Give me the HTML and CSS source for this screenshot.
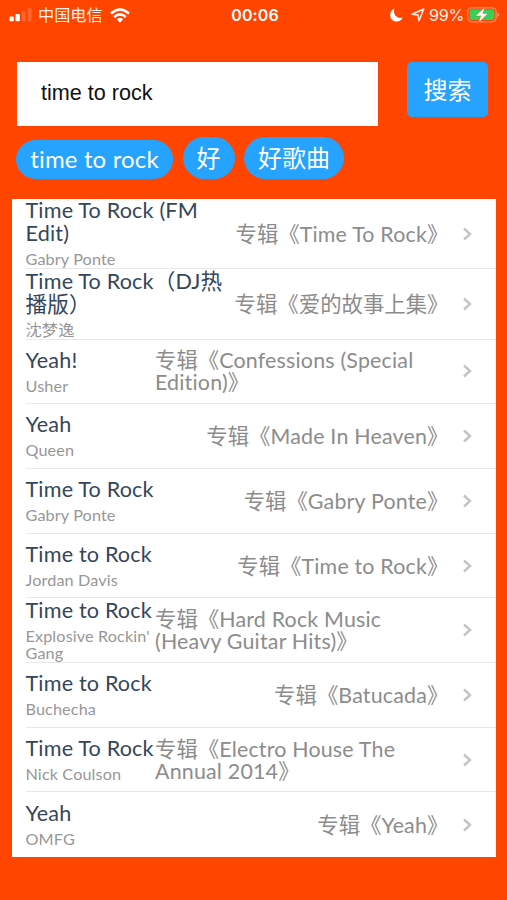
FILE: index.html
```
<!DOCTYPE html>
<html lang="zh-CN">
<head>
<meta charset="utf-8">
<title>搜索</title>
<link rel="stylesheet" href="styles.css">
</head>
<body>
<header class="status">
  <div class="status-left">
    <svg class="signal" width="24" height="14" viewBox="0 0 24 14" fill="#fff"><rect x=".5" y="8.5" width="4.3" height="4.8" rx="1"/><rect x="6.500" y="6" width="4.300" height="7.3" rx="1"/><rect x="12.8" y="3" width="3.800" height="10.3" rx="1" opacity=".18"/><rect x="18.8" y="0" width="3.800" height="13.3" rx="1" opacity=".18"/></svg>
    <span class="carrier">中国电信</span>
    <svg class="wifi" width="20" height="15" viewBox="0 0 20 15" fill="none" stroke="#fff" stroke-width="2.6"><path d="M1 5.4Q10-2.4 19 5.4"/><path d="M4.2 8.9Q10 3.9 15.800 8.900"/><path d="M6.700 11.200Q10 8.200 13.300 11.200L10 14.700Z" fill="#fff" stroke="none"/></svg>
  </div>
  <time class="clock">00:06</time>
  <div class="status-right">
    <svg class="moon" width="13" height="14" viewBox="0 0 13 14"><path fill="#fff" d="M4.400.6C1.500 2 0 4.500.2 7.400.4 11 3.200 13.500 6.700 13.500c2.800 0 5-1.500 6-4C7.500 11.300 2.500 7 4.400.6Z"/></svg>
    <svg class="arrow" width="14" height="14" viewBox="0 0 14 14"><path fill="none" stroke="#fff" stroke-opacity=".9" stroke-width="1.5" stroke-linejoin="round" d="M1 6.200 12.800 1 8 12.800 7 7Z"/></svg>
    <span class="percent">99%</span>
    <svg class="battery" width="34" height="16" viewBox="0 0 34 16"><rect x=".6" y=".8" width="28.500" height="14" rx="4" fill="none" stroke="#fff" stroke-opacity=".4" stroke-width="1.200"/><rect x="2.500" y="2.600" width="24.800" height="10.400" rx="2.300" fill="#34d058"/><path d="M30.500 5.500v4.500q1.800-.6 1.800-2.250t-1.800-2.250Z" fill="#fff" opacity=".4"/><path d="M17.800.2 8.500 8.900h5.300L11.500 15.700 21 6.600h-5.200Z" fill="#fff" stroke="#ff4500" stroke-width=".4"/></svg>
  </div>
</header>
<main>
  <section class="search">
    <div class="field">time to rock</div>
    <button class="go">搜索</button>
  </section>
  <nav class="tags">
    <span class="tag tag-latin">time to rock</span><span class="tag">好</span><span class="tag">好歌曲</span>
  </nav>
  <section class="list">
    <article class="row tall"><div class="song"><h2>Time To Rock (FM<br>Edit)</h2><p>Gabry Ponte</p></div><div class="album">专辑《<span>Time To Rock</span>》</div><svg class="chev" viewBox="0 0 9 14"><path d="M1 1.500 7 7 1 12.500"/></svg></article>
    <article class="row tall"><div class="song"><h2>Time To Rock（DJ热<br>播版）</h2><p>沈梦逸</p></div><div class="album">专辑《爱的故事上集》</div><svg class="chev" viewBox="0 0 9 14"><path d="M1 1.500 7 7 1 12.500"/></svg></article>
    <article class="row"><div class="song narrow"><h2>Yeah!</h2><p>Usher</p></div><div class="album wide">专辑《<span>Confessions (Special</span><br><span>Edition)</span>》</div><svg class="chev" viewBox="0 0 9 14"><path d="M1 1.500 7 7 1 12.500"/></svg></article>
    <article class="row"><div class="song"><h2>Yeah</h2><p>Queen</p></div><div class="album">专辑《<span>Made In Heaven</span>》</div><svg class="chev" viewBox="0 0 9 14"><path d="M1 1.500 7 7 1 12.500"/></svg></article>
    <article class="row"><div class="song"><h2>Time To Rock</h2><p>Gabry Ponte</p></div><div class="album">专辑《<span>Gabry Ponte</span>》</div><svg class="chev" viewBox="0 0 9 14"><path d="M1 1.500 7 7 1 12.500"/></svg></article>
    <article class="row"><div class="song"><h2>Time to Rock</h2><p>Jordan Davis</p></div><div class="album">专辑《<span>Time to Rock</span>》</div><svg class="chev" viewBox="0 0 9 14"><path d="M1 1.500 7 7 1 12.500"/></svg></article>
    <article class="row"><div class="song narrow"><h2>Time to Rock</h2><p>Explosive Rockin'<br>Gang</p></div><div class="album wide">专辑《<span>Hard Rock Music</span><br><span>(Heavy Guitar Hits)</span>》</div><svg class="chev" viewBox="0 0 9 14"><path d="M1 1.500 7 7 1 12.500"/></svg></article>
    <article class="row"><div class="song"><h2>Time to Rock</h2><p>Buchecha</p></div><div class="album">专辑《<span>Batucada</span>》</div><svg class="chev" viewBox="0 0 9 14"><path d="M1 1.500 7 7 1 12.500"/></svg></article>
    <article class="row"><div class="song narrow"><h2>Time To Rock</h2><p>Nick Coulson</p></div><div class="album wide">专辑《<span>Electro House The</span><br><span>Annual 2014</span>》</div><svg class="chev" viewBox="0 0 9 14"><path d="M1 1.500 7 7 1 12.500"/></svg></article>
    <article class="row"><div class="song"><h2>Yeah</h2><p>OMFG</p></div><div class="album">专辑《<span>Yeah</span>》</div><svg class="chev" viewBox="0 0 9 14"><path d="M1 1.500 7 7 1 12.500"/></svg></article>
  </section>
</main>
</body>
</html>
```
FILE: styles.css
```
* { box-sizing: border-box; }
body {
  margin: 0;
  width: 507px;
  height: 900px;
  overflow: hidden;
  background: #ff4500;
  font-family: Lato, "Noto Sans CJK SC", sans-serif;
  font-variant-ligatures: none;
}
h2, p { margin: 0; font-weight: 400; }

.status {
  display: grid;
  grid-template-columns: 1fr auto 1fr;
  align-items: center;
  height: 30px;
  padding: 0 6px 0 9px;
  color: #fff;
  font-family: Inter, "Noto Sans CJK SC", sans-serif;
  font-size: 16.200px;
  line-height: 30px;
}
.status-left, .status-right { display: flex; align-items: center; }
.status-right { justify-content: flex-end; }
.carrier { margin: 0 7px 0 5px; opacity: .9; }
.clock { font-weight: 600; font-size: 16px; letter-spacing: .1px; }
.moon { margin-right: 8px; }
.arrow { margin-right: 4px; }
.percent { margin-right: 3px; opacity: .9; letter-spacing: -.3px; }

.search {
  display: flex;
  justify-content: space-between;
  align-items: flex-start;
  padding: 32px 19px 0 17px;
}
.field {
  width: 361px;
  height: 64px;
  padding-left: 24px;
  background: #fff;
  color: #111;
  font: 21.600px/62px "Liberation Sans", sans-serif;
}
.go {
  width: 81px;
  height: 55px;
  padding: 0;
  border: 0;
  border-radius: 5px;
  background: #26a2ff;
  color: #fff;
  font: 24px/55px Lato, "Noto Sans CJK SC", sans-serif;
}

.tags {
  display: flex;
  align-items: flex-end;
  gap: 9.500px;
  height: 53px;
  padding-left: 16px;
}
.tag {
  height: 42px;
  padding: 0 14px;
  border-radius: 21px;
  background: #26a2ff;
  color: #fff;
  font-size: 24px;
  line-height: 42px;
}
.tag-latin {
  width: 157px;
  height: 39px;
  padding: 0;
  line-height: 38px;
  letter-spacing: .15px;
  text-align: center;
  white-space: nowrap;
}

.list {
  width: 484.500px;
  margin: 20px 0 0 11.500px;
  background: #fff;
}
.row {
  display: flex;
  align-items: center;
  height: 64.700px;
  margin-left: 14px;
  padding-right: 24.500px;
  border-bottom: 1px solid #e8e8ea;
  white-space: nowrap;
}
.row.tall { height: 70.300px; }
.row:last-child { border-bottom: 0; }
.song { flex: 1; }
.song.narrow { flex: 0 0 129.500px; }
h2 { color: #35465a; font-size: 21.600px; line-height: 23px; letter-spacing: .17px; }
p { margin-top: 6px; color: #979797; font-size: 16.200px; line-height: 16.500px; letter-spacing: .13px; }
.album { color: #8c8c8c; font-size: 21.400px; line-height: 22px; }
.album span { letter-spacing: .2px; }
.album.wide { flex: 1; }
.chev {
  width: 9px;
  height: 14px;
  margin-left: 14px;
  fill: none;
  stroke: #c3c3c8;
  stroke-width: 2.400;
}
```
